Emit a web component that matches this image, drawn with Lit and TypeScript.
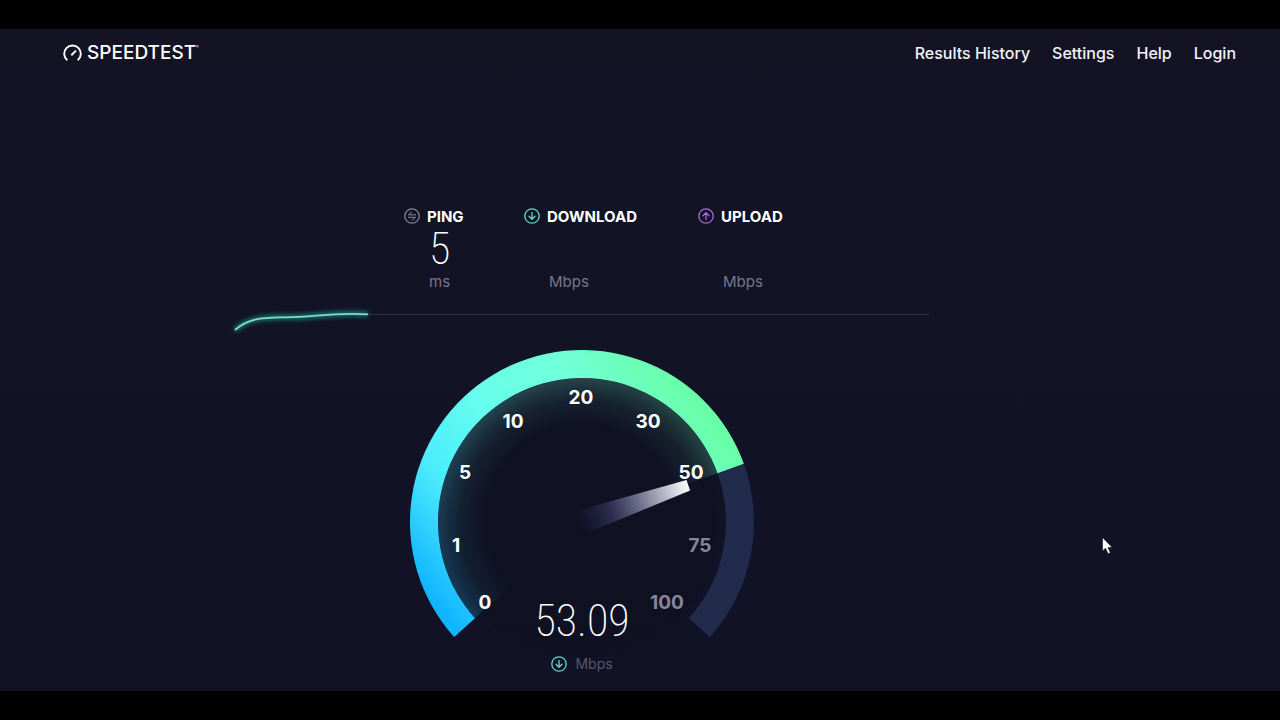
import { LitElement, html, svg, css } from "lit";
import { customElement, property } from "lit/decorators.js";

@customElement("direction-icon")
class DirectionIcon extends LitElement {
  @property() kind = "down";

  static styles = css`
    :host { display: block; width: 16px; height: 16px; }
    .icon { display: block; width: 16px; height: 16px; overflow: visible; fill: none; stroke-linecap: round; stroke-linejoin: round; }
    .down { stroke: #62d9c8; }
    .up { stroke: #a86be0; }
    .both { stroke: #85869a; }
  `;

  render() {
    const glyph =
      this.kind === "both"
        ? svg`<path stroke-width="1" d="M11.600 6.800H4.400L7.800 3.900M4.400 9.300H11.600L8.200 12.200"/>`
        : this.kind === "up"
          ? svg`<path d="M8 11.6V4.9M5 7.7l3-3 3 3"/>`
          : svg`<path d="M8 4.4v6.7M5 8.3l3 3 3-3"/>`;
    return html`<svg class="icon ${this.kind}" viewBox="0 0 16 16" aria-hidden="true">
      <circle cx="8" cy="8" r="7.2" stroke-width="1.3" />
      <g stroke-width="1.3">${glyph}</g>
    </svg>`;
  }
}

const CX = 174;
const CY = 174;
const OUTER = 172;
const INNER = 144;

function point(radius: number, degrees: number) {
  const a = (degrees * Math.PI) / 180;
  return `${(CX + radius * Math.cos(a)).toFixed(2)} ${(CY - radius * Math.sin(a)).toFixed(2)}`;
}

function band(from: number, to: number) {
  const large = from - to > 180 ? 1 : 0;
  return `M${point(OUTER, from)}A${OUTER} ${OUTER} 0 ${large} 1 ${point(OUTER, to)}L${point(INNER, to)}A${INNER} ${INNER} 0 ${large} 0 ${point(INNER, from)}Z`;
}

function sector(from: number, to: number) {
  const large = from - to > 180 ? 1 : 0;
  return `M${CX} ${CY}L${point(INNER, from)}A${INNER} ${INNER} 0 ${large} 1 ${point(INNER, to)}Z`;
}

const TICKS = [
  { label: "0", x: 77, y: 261 },
  { label: "1", x: 48, y: 204 },
  { label: "5", x: 57, y: 131 },
  { label: "10", x: 105, y: 80 },
  { label: "20", x: 173, y: 56 },
  { label: "30", x: 240, y: 80 },
  { label: "50", x: 283, y: 131 },
  { label: "75", x: 292, y: 204, dim: true },
  { label: "100", x: 259, y: 261, dim: true },
];

@customElement("speed-gauge")
class SpeedGauge extends LitElement {
  @property() value = "53.09";
  @property({ type: Number }) angle = 19.8;

  static styles = css`
    :host { display: grid; justify-items: center; width: 348px; }
    .dial { grid-area: 1 / 1; display: block; width: 348px; height: 324px; overflow: visible; }
    .tick { fill: #fff; font-size: 19px; font-weight: 700; text-anchor: middle; }
    .dim { fill: #85869a; }
    .track { fill: #212c4d; }
    .readout { grid-area: 1 / 1; align-self: end; display: flex; flex-direction: column; align-items: center; }
    .value { font-family: "Roboto Condensed", Roboto, sans-serif; font-weight: 200; font-size: 44px; line-height: 70px; color: #fff; }
    .unit { display: flex; align-items: center; gap: 8px; font-size: 14px; line-height: 16px; color: #55566c; }
  `;

  render() {
    return html`
      <svg class="dial" viewBox="0 0 348 324" role="img" aria-label="Download speed gauge">
        <defs>
          <linearGradient id="speed" gradientUnits="userSpaceOnUse" x1="66" y1="299" x2="322" y2="86">
            <stop offset="0" stop-color="#12b6ff" />
            <stop offset="0.1" stop-color="#2accff" />
            <stop offset="0.24" stop-color="#4aebfd" />
            <stop offset="0.48" stop-color="#66feee" />
            <stop offset="0.76" stop-color="#70ffd6" />
            <stop offset="1" stop-color="#68fea4" />
          </linearGradient>
          <radialGradient id="fade" gradientUnits="userSpaceOnUse" cx="174" cy="174" r="144">
            <stop offset="0.66" stop-color="#fff" stop-opacity="0" />
            <stop offset="0.84" stop-color="#fff" stop-opacity="0.07" />
            <stop offset="1" stop-color="#fff" stop-opacity="0.21" />
          </radialGradient>
          <mask id="edge"><circle cx="174" cy="174" r="144" fill="url(#fade)" /></mask>
          <linearGradient id="beam" gradientUnits="userSpaceOnUse" x1="170" y1="0" x2="287" y2="0">
            <stop offset="0" stop-color="#24264c" stop-opacity="0" />
            <stop offset="0.3" stop-color="#34365c" stop-opacity="0.8" />
            <stop offset="0.65" stop-color="#8f90a6" />
            <stop offset="1" stop-color="#fff" />
          </linearGradient>
        </defs>
        <circle cx="174" cy="174" r="136" fill="#0f1121" opacity="0.6" />
        <path class="track" d=${band(this.angle, -42)} />
        <path d=${sector(222, this.angle)} fill="url(#speed)" mask="url(#edge)" />
        <path d=${band(222, this.angle)} fill="url(#speed)" />
        <path d="M170 161.500L286.500 168.500V179.500L170 186.500Z" fill="url(#beam)" transform="rotate(${-19.1} 174 174)" />
        ${TICKS.map((t) => svg`<text class="tick ${t.dim ? "dim" : ""}" x=${t.x} y=${t.y}>${t.label}</text>`)}
      </svg>
      <div class="readout">
        <output class="value">${this.value}</output>
        <div class="unit"><direction-icon kind="down"></direction-icon>Mbps</div>
      </div>
    `;
  }
}

@customElement("app-root")
class AppRoot extends LitElement {
  static styles = css`
    :host { display: flex; flex-direction: column; min-height: 100vh; box-sizing: border-box; padding: 29px 0; background: #000; color: #fff; font-family: Inter, "Open Sans", sans-serif; }
    .page { position: relative; flex: 1; background: linear-gradient(#131324, #121325 45%, #111226); }
    .header { display: flex; justify-content: space-between; align-items: center; height: 48px; padding: 0 44px 0 63px; }
    .brand { display: flex; align-items: center; gap: 5px; color: #fff; text-decoration: none; font-size: 19px; font-weight: 500; line-height: 24px; }
    .mark { display: block; width: 19px; height: 19px; }
    .reg { align-self: flex-start; font-size: 4px; line-height: 12px; margin-left: -5px; }
    .nav { display: flex; gap: 22px; font-size: 16px; font-weight: 500; line-height: 24px; }
    .link { color: #f4f4fa; text-decoration: none; }
    .test { display: flex; flex-direction: column; align-items: center; padding: 129px 116px 0 0; }
    .metrics { display: grid; grid-template-columns: 120px 174px 1fr; width: 694px; max-width: 100%; box-sizing: border-box; padding-left: 169px; }
    .metric { display: grid; grid-template-columns: 16px 1fr; column-gap: 7px; grid-template-rows: 20px 46px 20px; }
    .name { grid-column: 1 / -1; display: flex; align-items: center; gap: 7px; font-size: 15px; font-weight: 700; }
    .number, .unit { grid-column: 2; margin: 0 2px; }
    .number { font-family: "Roboto Condensed", Roboto, sans-serif; font-weight: 200; font-size: 44px; line-height: 46px; }
    .unit { font-size: 15px; line-height: 20px; color: #77788c; }
    .chart { display: block; width: 694px; max-width: 100%; height: 24px; margin: 14px 0 18px; overflow: visible; }
    .cursor { position: absolute; left: 1102px; top: 508px; width: 12px; height: 18px; }
  `;

  render() {
    return html`
      <div class="page">
        <header class="header">
          <a class="brand" href="#">
            <svg class="mark" viewBox="0 0 19 19" fill="none" stroke="#fff" stroke-width="1.900" aria-hidden="true">
              <path d="M4.300 16.200A8.300 8.300 0 1 1 14.700 16.200" />
              <path d="M8.300 11.200L13 6.600" stroke-width="2" />
            </svg>
            <span>SPEEDTEST</span><span class="reg">®</span>
          </a>
          <nav class="nav">
            ${["Results History", "Settings", "Help", "Login"].map((t) => html`<a class="link" href="#">${t}</a>`)}
          </nav>
        </header>
        <main class="test">
          <section class="metrics">
            ${[
              { icon: "both", name: "PING", value: "5", unit: "ms" },
              { icon: "down", name: "DOWNLOAD", value: "", unit: "Mbps" },
              { icon: "up", name: "UPLOAD", value: "", unit: "Mbps" },
            ].map(
              (m) => html`<div class="metric">
                <div class="name"><direction-icon kind=${m.icon}></direction-icon>${m.name}</div>
                <div class="number">${m.value}</div>
                <div class="unit">${m.unit}</div>
              </div>`,
            )}
          </section>
          <svg class="chart" viewBox="0 0 694 24" fill="none" aria-hidden="true">
            <defs><filter id="glow" x="-10%" y="-100%" width="120%" height="300%"><feGaussianBlur stdDeviation="2.500" /></filter></defs>
            <path d="M132 8.500H694" stroke="#2b2c3e" />
            <path d="M0 24C12 13 26 11.500 46 11.300C78 12 92 6 133 8.300" stroke="#23c8ac" stroke-width="4" opacity="0.7" filter="url(#glow)" />
            <path d="M0 24C12 13 26 11.500 46 11.300C78 12 92 6 133 8.300" stroke="#80dcd0" stroke-width="1.800" />
          </svg>
          <speed-gauge></speed-gauge>
        </main>
        <svg class="cursor" viewBox="0 0 12 18" aria-hidden="true">
          <path d="M.5 .5V14L3.600 11.200L6 16.800L8.300 15.800L6 10.500H10.200Z" fill="#fff" stroke="#111" stroke-width=".6" />
        </svg>
      </div>
    `;
  }
}
